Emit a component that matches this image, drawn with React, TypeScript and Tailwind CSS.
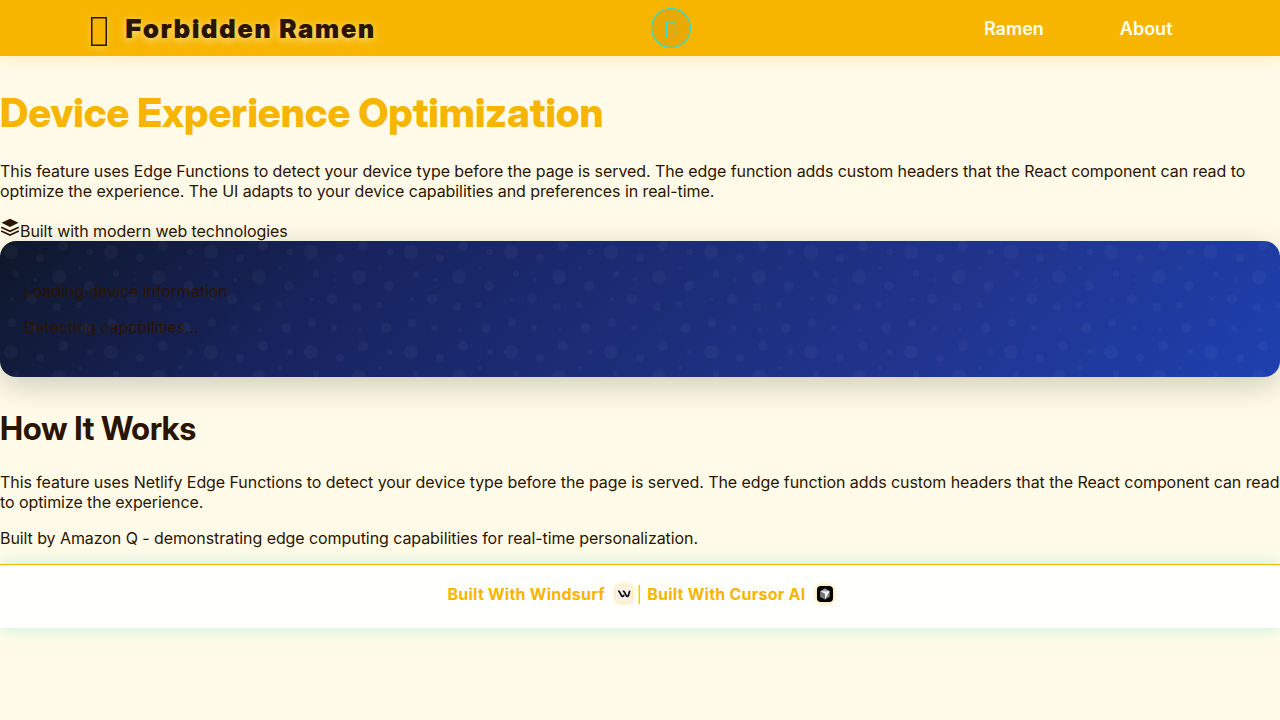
import React from 'react';

const BUBBLES: [number, number, number][] = [
  [11, 11, 7], [59, 36, 7], [16, 33, 3], [79, 64, 3], [34, 87, 3], [90, 11, 3],
  [12, 82, 4], [40, 17, 4], [63, 5, 5], [57, 66, 4], [86, 87, 5], [32, 58, 5],
  [89, 45, 5], [80, 27, 2], [60, 89, 2], [35, 39, 2], [12, 58, 2],
];

function Header() {
  return (
    <header className="flex h-14 items-center bg-[#f8b500] pl-[91px] pr-[107.5px] shadow-[0_2px_16px_rgba(248,181,0,0.2)]">
      <div className="flex w-[286px] items-center text-[#2b1500] [text-shadow:0_2px_8px_rgba(255,251,230,0.7)]">
        <span className="mt-[7px] mr-[18.5px] h-[29px] w-4 shadow-[0_2px_8px_rgba(255,251,230,0.3)]">
          <svg className="block h-[29px] w-4" viewBox="0 0 16 29" fill="none" stroke="currentColor" strokeWidth="1.500">
            <path d="M.75.75h14.500v27.500H.75z" />
          </svg>
        </span>
        <span className="font-['Inter_Display',Inter,sans-serif] text-[26px] font-black tracking-[1.92px] whitespace-nowrap">Forbidden Ramen</span>
      </div>
      <button className="ml-[274px] flex size-10 items-center justify-center rounded-full bg-black/6" aria-label="Toggle theme">
        <svg className="block size-10" viewBox="0 0 40 40" fill="none" stroke="#2fe0cf" strokeWidth="1.200">
          <circle cx="20" cy="20" r="19.400" />
          <path d="M15.500 14h9v15.500h-9z" />
        </svg>
      </button>
      <nav className="mt-0.5 ml-auto flex gap-[76px] text-lg font-semibold text-[#fffef2]">
        <a href="#ramen">Ramen</a>
        <a href="#about">About</a>
      </nav>
    </header>
  );
}

function LayersIcon() {
  return (
    <svg className="h-5 w-5" viewBox="0 0 20 20" fill="none" stroke="currentColor" strokeWidth="1.600">
      <path d="M10 1.800 18.500 5.800 10 9.900 1.500 5.800z" fill="currentColor" stroke="none" />
      <path d="M1.200 10.200 10 14.300l8.800-4.100" />
      <path d="M1.200 14 10 18.100l8.800-4.100" />
    </svg>
  );
}

function DevicePanel() {
  return (
    <section className="relative h-[136px] overflow-hidden rounded-2xl bg-[linear-gradient(135deg,#0f172a_0%,#182460_28%,#20358f_74%,#1e40af_100%)] px-6 pt-10">
      <p className="mb-4 leading-5">Loading device information</p>
      <p className="leading-5">Detecting capabilities...</p>
      <svg className="absolute inset-0 h-full w-full" aria-hidden="true">
        <defs>
          <pattern id="bubbles" width="100" height="100" patternUnits="userSpaceOnUse">
            {BUBBLES.map(([cx, cy, r]) => (
              <circle key={`${cx}-${cy}`} cx={cx} cy={cy} r={r} fill="#fff" fillOpacity="0.03" />
            ))}
          </pattern>
        </defs>
        <rect width="100%" height="100%" fill="url(#bubbles)" />
      </svg>
    </section>
  );
}

function WindsurfLogo() {
  return (
    <svg className="ml-[11px] size-4 rounded-[2px] bg-[#fbf1e9] shadow-[0_0_5px_#f9b500a0]" viewBox="0 0 16 16" fill="none" stroke="#111" strokeWidth="1.800">
      <path d="M2 5.200c1.300 0 1.700.8 2.200 1.900.7 1.600 1.200 3.300 2.300 3.300.9 0 1.200-.8 1.400-1.700" />
      <path d="M6.800 5.200c1.300 0 1.700.8 2.200 1.900.7 1.600 1.200 3.300 2.300 3.300s1.300-1.400 1.600-2.900c.2-1.200.5-2 1.400-2.300" />
    </svg>
  );
}

function CursorLogo() {
  return (
    <svg className="ml-[11px] size-4 rounded-[4px] bg-black shadow-[0_0_5px_#f9b500a0]" viewBox="0 0 16 16">
      <path d="M8 2.500 12.700 5.200v5.600L8 13.500l-4.700-2.700V5.200z" fill="#888" />
      <path d="M3.300 5.200 8 2.500l4.700 2.700z" fill="#999" />
      <path d="M3.300 5.200h9.400L8 13.300V8z" fill="#f2f2f2" />
      <path d="M3.300 5.200 8 8v5.500l-4.700-2.700z" fill="#777" />
    </svg>
  );
}

function Footer() {
  return (
    <footer className="flex h-16 items-start justify-center border-t border-[#f8b500] bg-[#fffffd] pt-[19px] leading-5 font-bold tracking-[0.24px] text-[#f8b500] shadow-[0_0_16px_rgba(64,224,208,0.33)]">
      <a className="flex items-center" href="#windsurf">Built With Windsurf<WindsurfLogo /></a>
      <span className="mx-[5px] font-normal tracking-normal">|</span>
      <a className="flex items-center" href="#cursor">Built With Cursor AI<CursorLogo /></a>
    </footer>
  );
}

export default function App() {
  return (
    <div className="min-h-screen bg-[#fffbe8] font-[Inter,sans-serif] text-base text-[#2b1500]">
      <Header />
      <main className="tracking-[-0.074px]">
        <h1 className="pt-8 font-['Inter_Display',Inter,sans-serif] text-[40px] leading-[50px] font-extrabold tracking-normal text-[#f8b500]">Device Experience Optimization</h1>
        <p className="mt-[23px] leading-5">
          This feature uses Edge Functions to detect your device type before the page is served. The edge function adds custom headers that the React component can read to optimize the experience. The UI adapts to your device capabilities and preferences in real-time.
        </p>
        <div className="mt-4 flex h-6 items-start">
          <LayersIcon />
          <span className="mt-1 leading-5">Built with modern web technologies</span>
        </div>
        <div className="rounded-2xl shadow-[0_8px_32px_rgba(0,0,0,0.2)]">
          <DevicePanel />
        </div>
        <h2 className="mt-8 font-['Inter_Display',Inter,sans-serif] text-[32px] leading-10 font-bold tracking-normal">How It Works</h2>
        <p className="mt-[23px] leading-5">
          This feature uses Netlify Edge Functions to detect your device type before the page is served. The edge function adds custom headers that the React component can read to optimize the experience.
        </p>
        <p className="mt-4 mb-4 leading-5">Built by Amazon Q - demonstrating edge computing capabilities for real-time personalization.</p>
      </main>
      <Footer />
    </div>
  );
}
